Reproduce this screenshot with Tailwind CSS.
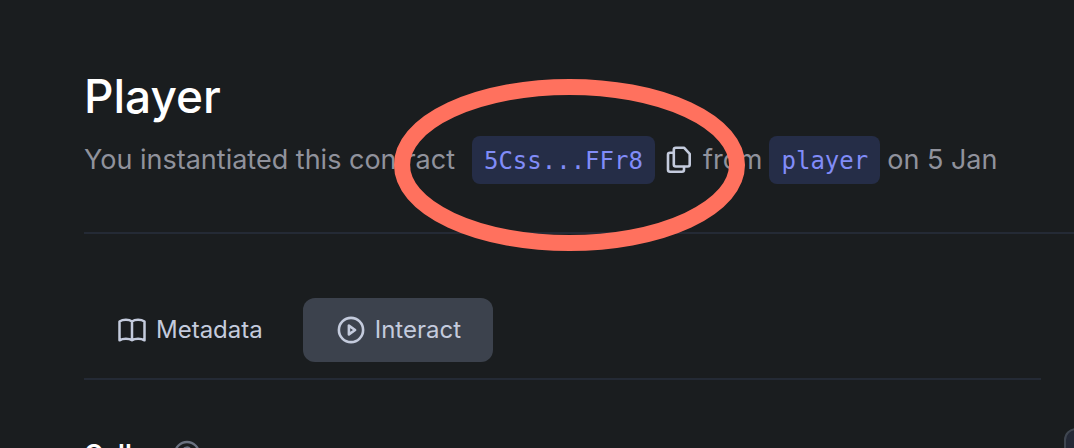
<!DOCTYPE html>
<html lang="en">
<head>
<meta charset="utf-8">
<meta name="viewport" content="width=device-width, initial-scale=1">
<title>Player</title>
<script src="https://cdn.jsdelivr.net/npm/@tailwindcss/browser@4"></script>
</head>
<body class="relative h-screen overflow-hidden bg-[#1a1d1f] font-['Inter',sans-serif] text-[#90929c]">
<main class="pl-[84px] pt-[68px]">
  <header class="border-b-2 border-[#242a35] pb-12">
    <h1 class="text-[46px] leading-[56px] font-medium text-white">Player</h1>
    <div class="mt-3 flex h-12 items-center gap-[7px] text-[27px] whitespace-nowrap">
      <span class="mr-2.5">You instantiated this contract</span>
      <code class="rounded-lg bg-[#252d47] px-3 font-['DejaVu_Sans_Mono',monospace] text-2xl leading-[50px] h-12 text-[#818cf8]">5Css...FFr8</code>
      <button type="button" aria-label="Copy address" class="ml-1 text-[#c4cbdd]">
        <svg class="block" width="26" height="28" viewBox="0 0 26 28" fill="none" stroke="currentColor" stroke-width="2.6" stroke-linejoin="round" stroke-linecap="round"><path d="M10 1.800h8.200l5.500 6v10.700a2 2 0 0 1-2 2H9.800a2 2 0 0 1-2-2V3.800a2 2 0 0 1 2-2z"/><path d="M7.500 6.800H4a2 2 0 0 0-2 2v14.900a2 2 0 0 0 2 2h12a2 2 0 0 0 2-2v-2.700"/></svg>
      </button>
      <span class="ml-1">from</span>
      <code class="rounded-lg bg-[#252d47] px-3 font-['DejaVu_Sans_Mono',monospace] text-2xl leading-[50px] h-12 text-[#818cf8]">player</code>
      <span>on 5 Jan</span>
    </div>
  </header>
  <div class="flex items-start gap-[23px] pt-16">
    <section class="min-w-0 flex-1">
      <div role="tablist" class="flex gap-2 border-b-2 border-[#242a35] pb-4 text-2xl text-[#c4cbdd]">
        <button type="button" role="tab" aria-selected="false" class="flex h-16 items-center gap-2 rounded-xl px-8">
          <svg width="32" height="28" viewBox="0 0 32 28" fill="none" stroke="currentColor" stroke-width="2.500" stroke-linejoin="round" stroke-linecap="butt"><path d="M16 5.500C13 3.300 7 3.300 3.500 5.500v18.800c3.500-2 9.500-2 12.500 0 3-2 9-2 12.500 0V5.500C25 3.300 19 3.300 16 5.500zM16 5.500v18.800"/></svg>
          Metadata
        </button>
        <button type="button" role="tab" aria-selected="true" class="flex h-16 items-center gap-2 rounded-xl bg-[#3c424d] px-8">
          <svg width="32" height="30" viewBox="0 0 32 30" fill="none" stroke="currentColor" stroke-width="2.600" stroke-linejoin="round"><circle cx="16" cy="15" r="12.100"/><path d="M13.900 10.600v8.800l6.200-4.400z"/></svg>
          Interact
        </button>
      </div>
      <div class="flex items-center gap-4 pt-[58px] text-[26px] leading-8 font-semibold text-white">
        <label for="caller">Caller</label>
        <svg class="text-[#6b7280]" width="28" height="28" viewBox="0 0 28 28" fill="none" stroke="currentColor" stroke-width="2.400"><circle cx="14" cy="14" r="12"/><path d="M10.500 11a3.500 3.500 0 1 1 5 3.200c-1 .5-1.500 1-1.500 2.300M14 19v2"/></svg>
      </div>
      <input id="caller" class="mt-3 h-16 w-full rounded-xl border-2 border-[#3f4650] bg-[#242936]">
    </section>
    <aside class="-mr-[310px] mt-[130px] h-80 w-80 shrink-0 rounded-xl border-2 border-[#3f4650] bg-[#242936]"></aside>
  </div>
</main>
<svg class="pointer-events-none absolute top-[79px] left-[394px]" width="352" height="172" viewBox="0 0 352 172" fill="none"><ellipse cx="175.500" cy="86" rx="167.500" ry="78" stroke="#ff715e" stroke-width="16"/></svg>
</body>
</html>
